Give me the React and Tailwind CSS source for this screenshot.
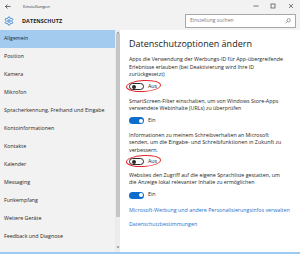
import React from "react";

const font = { fontFamily: '"Open Sans", "Noto Sans", sans-serif' };

function Toggle({ on }) {
  return on ? (
    <div className="relative w-[15px] h-[7px] rounded-full bg-[#0f6ecd]">
      <div className="absolute right-[1.5px] top-[1.5px] w-[4px] h-[4px] rounded-full bg-white" />
    </div>
  ) : (
    <div className="relative w-[15px] h-[7px] rounded-full border border-[#2a2a2a] bg-white">
      <div className="absolute left-[1.5px] top-[0.5px] w-[4px] h-[4px] rounded-full bg-[#2a2a2a]" />
    </div>
  );
}

function Option({ lines, on, circled, mt, tmt }) {
  return (
    <div className={mt}>
      <div className="text-[5.3px] leading-[7.5px] text-[#262626]">
        {lines.map((l, i) => (
          <div key={i} className="whitespace-nowrap">{l}</div>
        ))}
      </div>
      <div className={`relative flex items-center gap-[4px] h-[8px] ${tmt}`}>
        <Toggle on={on} />
        <span className="text-[5.3px] text-[#262626]">{on ? "Ein" : "Aus"}</span>
        {circled && (
          <div className="absolute left-[-3.5px] top-[-2.5px] w-[35px] h-[12px] rounded-[50%] border-[1.5px] border-[#e3262b] -rotate-3" />
        )}
      </div>
    </div>
  );
}

const items = [
  "Allgemein",
  "Position",
  "Kamera",
  "Mikrofon",
  "Spracherkennung, Freihand und Eingabe",
  "Kontoinformationen",
  "Kontakte",
  "Kalender",
  "Messaging",
  "Funkempfang",
  "Weitere Geräte",
  "Feedback und Diagnose",
  "Hintergrund-Apps",
];

export default function App() {
  return (
    <div className="w-[300px] h-[254px] flex flex-col bg-white overflow-hidden" style={font}>
      {/* header */}
      <div className="h-[30px] bg-[#f2f2f2] flex flex-col">
        <div className="h-[12px] flex items-center">
          <svg width="6" height="5" viewBox="0 0 6 5" className="ml-[5px]">
            <path d="M0.5 2.5H5.5M0.5 2.5L2.5 0.5M0.5 2.5L2.5 4.5" stroke="#333" strokeWidth="0.7" fill="none" />
          </svg>
          <span className="ml-[12px] text-[4.3px] text-[#333]">Einstellungen</span>
          <div className="ml-auto flex items-center">
            <svg width="6" height="6" viewBox="0 0 6 6" className="mr-[11px]">
              <path d="M0.5 3H5.5" stroke="#444" strokeWidth="0.7" />
            </svg>
            <svg width="6" height="6" viewBox="0 0 6 6" className="mr-[12px]">
              <rect x="1" y="1" width="4" height="4" stroke="#444" strokeWidth="0.7" fill="none" />
            </svg>
            <svg width="6" height="6" viewBox="0 0 6 6" className="mr-[6px]">
              <path d="M1 1L5 5M5 1L1 5" stroke="#444" strokeWidth="0.7" />
            </svg>
          </div>
        </div>
        <div className="h-[18px] flex items-center">
          <svg width="10" height="10" viewBox="0 0 24 24" className="ml-[4px]" fill="none" stroke="#1a73cf" strokeWidth="2">
            <path d="M12.22 2h-.44a2 2 0 0 0-2 2v.18a2 2 0 0 1-1 1.73l-.43.25a2 2 0 0 1-2 0l-.15-.08a2 2 0 0 0-2.73.73l-.22.38a2 2 0 0 0 .73 2.73l.15.1a2 2 0 0 1 1 1.72v.51a2 2 0 0 1-1 1.74l-.15.09a2 2 0 0 0-.73 2.73l.22.38a2 2 0 0 0 2.73.73l.15-.08a2 2 0 0 1 2 0l.43.25a2 2 0 0 1 1 1.73V20a2 2 0 0 0 2 2h.44a2 2 0 0 0 2-2v-.18a2 2 0 0 1 1-1.73l.43-.25a2 2 0 0 1 2 0l.15.08a2 2 0 0 0 2.73-.73l.22-.39a2 2 0 0 0-.73-2.73l-.15-.08a2 2 0 0 1-1-1.74v-.5a2 2 0 0 1 1-1.74l.15-.09a2 2 0 0 0 .73-2.73l-.22-.38a2 2 0 0 0-2.73-.73l-.15.08a2 2 0 0 1-2 0l-.43-.25a2 2 0 0 1-1-1.73V4a2 2 0 0 0-2-2z" />
            <circle cx="12" cy="12" r="3" />
          </svg>
          <span className="ml-[8px] text-[5.4px] font-bold text-[#1a1a1a] tracking-[0.1px]">DATENSCHUTZ</span>
          <div className="ml-auto mr-[4px] w-[111px] h-[14px] border border-[#a8a8a8] bg-white flex items-center px-[4px]">
            <span className="text-[5px] text-[#7a7a7a]">Einstellung suchen</span>
            <svg width="6" height="6" viewBox="0 0 6 6" className="ml-auto" fill="none" stroke="#666" strokeWidth="0.6">
              <circle cx="3.7" cy="2.3" r="1.7" />
              <path d="M2.5 3.5L0.6 5.4" />
            </svg>
          </div>
        </div>
      </div>

      {/* body */}
      <div className="flex-1 flex min-h-0">
        <div className="w-[115px] bg-[#f2f2f2] flex flex-col overflow-hidden">
          {items.map((it, i) => (
            <div
              key={it}
              className={`h-[18px] shrink-0 flex items-center pl-[4px] text-[5.3px] text-[#262626] whitespace-nowrap ${i === 0 ? "bg-[#a3cbef]" : ""}`}
            >
              {it}
            </div>
          ))}
        </div>
        <div className="w-[5px] bg-[#ececec] flex flex-col items-center">
          <svg width="4" height="3" viewBox="0 0 4 3" className="mt-[0.5px]">
            <path d="M0.5 2.5L2 0.8L3.5 2.5Z" fill="#777" />
          </svg>
          <div className="w-[4px] h-[183px] bg-[#c6c6c6]" />
          <svg width="4" height="3" viewBox="0 0 4 3" className="mt-auto mb-[3px]">
            <path d="M0.5 0.5L2 2.2L3.5 0.5Z" fill="#777" />
          </svg>
        </div>
        <div className="flex-1 bg-white pl-[9px] pt-[8px] overflow-hidden">
          <div className="text-[9px] leading-[12px] text-[#1a1a1a] whitespace-nowrap">Datenschutzoptionen ändern</div>
          <Option
            mt="mt-[6px]"
            tmt="mt-[4px]"
            lines={[
              "Apps die Verwendung der Werbungs-ID für App-übergreifende",
              "Erlebnisse erlauben (bei Deaktivierung wird Ihre ID",
              "zurückgesetzt)",
            ]}
            on={false}
            circled
          />
          <Option
            mt="mt-[7px]"
            tmt="mt-[4px]"
            lines={[
              "SmartScreen-Filter einschalten, um von Windows Store-Apps",
              "verwendete Webinhalte (URLs) zu überprüfen",
            ]}
            on
          />
          <Option
            mt="mt-[7px]"
            tmt="mt-[3.5px]"
            lines={[
              "Informationen zu meinem Schreibverhalten an Microsoft",
              "senden, um die Eingabe- und Schreibfunktionen in Zukunft zu",
              "verbessern.",
            ]}
            on={false}
            circled
          />
          <Option
            mt="mt-[6px]"
            tmt="mt-[4.5px]"
            lines={[
              "Websites den Zugriff auf die eigene Sprachliste gestatten, um",
              "die Anzeige lokal relevanter Inhalte zu ermöglichen",
            ]}
            on
          />
          <div className="mt-[8px] text-[5.3px] leading-[7.5px] text-[#1a73d0] whitespace-nowrap">
            Microsoft-Werbung und andere Personalisierungsinfos verwalten
          </div>
          <div className="mt-[6.5px] text-[5.3px] leading-[7.5px] text-[#1a73d0] whitespace-nowrap">
            Datenschutzbestimmungen
          </div>
        </div>
      </div>
      <div className="h-[2px] bg-[#9ccaf0]" />
    </div>
  );
}
